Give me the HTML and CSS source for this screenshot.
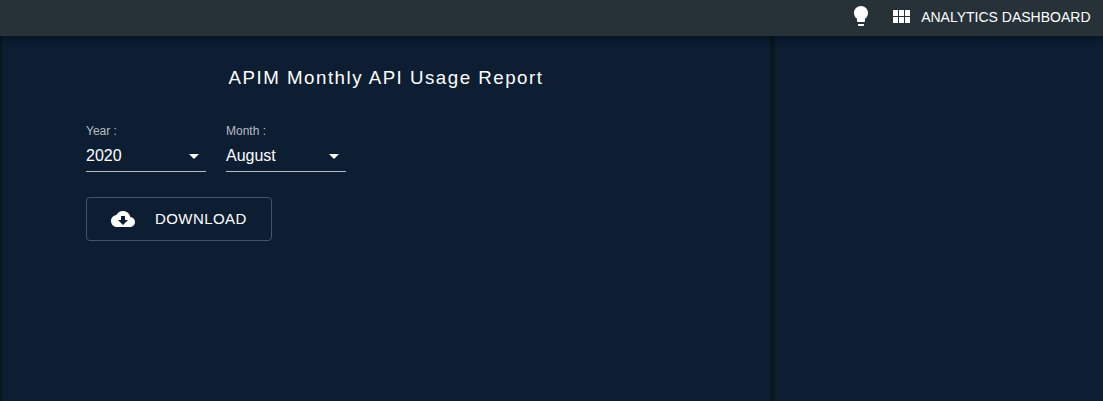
FILE: index.html
```html
<!DOCTYPE html>
<html lang="en">
<head>
<meta charset="utf-8">
<title>Analytics Dashboard</title>
<link rel="stylesheet" href="styles.css">
</head>
<body>
<header class="topbar">
  <svg class="icon bulb" viewBox="0 0 24 24"><path d="M9 21c0 .55.45 1 1 1h4c.55 0 1-.45 1-1v-1H9v1zm3-19C8.14 2 5 5.14 5 9c0 2.38 1.19 4.47 3 5.74V17c0 .55.45 1 1 1h6c.55 0 1-.45 1-1v-2.26c1.81-1.27 3-3.36 3-5.74 0-3.86-3.14-7-7-7z"/></svg>
  <a class="portal"><svg class="icon" viewBox="0 0 24 24"><path d="M4 11h5V5H4v6zm0 7h5v-6H4v6zm6 0h5v-6h-5v6zm6 0h5v-6h-5v6zm-6-7h5V5h-5v6zm6-6v6h5V5h-5z"/></svg><span>ANALYTICS DASHBOARD</span></a>
</header>
<main class="panes">
  <section class="pane report">
    <h1 class="title">APIM Monthly API Usage Report</h1>
    <form class="form">
      <div class="fields">
        <div class="field"><label class="label">Year :</label><div class="select"><span>2020</span><svg class="icon" viewBox="0 0 24 24"><path d="M7 10l5 5 5-5z"/></svg></div></div>
        <div class="field"><label class="label">Month :</label><div class="select"><span>August</span><svg class="icon" viewBox="0 0 24 24"><path d="M7 10l5 5 5-5z"/></svg></div></div>
      </div>
      <button class="download" type="button"><svg class="icon" viewBox="0 0 24 24"><path d="M19.35 10.04C18.67 6.59 15.64 4 12 4 9.11 4 6.6 5.64 5.35 8.04 2.34 8.36 0 10.91 0 14c0 3.31 2.69 6 6 6h13c2.76 0 5-2.24 5-5 0-2.64-2.05-4.78-4.65-4.96zM17 13l-5 5-5-5h3V9h4v4h3z"/></svg><span class="download-text">DOWNLOAD</span></button>
    </form>
  </section>
  <section class="pane side"></section>
</main>
</body>
</html>
```
FILE: styles.css
```css
* { box-sizing: border-box; }
body { margin: 0; height: 401px; overflow: hidden; display: flex; flex-direction: column; background: #08181e; color: #fff; font-family: "Liberation Sans", Arial, sans-serif; }
.icon { display: block; width: 24px; height: 24px; fill: #fff; flex: none; }
.topbar { height: 36px; flex: none; display: flex; align-items: center; justify-content: flex-end; padding: 0 12.5px 2px 0; background: #263238; box-shadow: 0 2px 4px -1px rgba(0,0,0,.2), 0 4px 5px rgba(0,0,0,.14), 0 1px 10px rgba(0,0,0,.12); z-index: 1; }
.portal { display: flex; align-items: center; gap: 8px; margin-left: 16px; font-size: 14px; line-height: 20px; }
.bulb { margin-top: -2px; }
.panes { flex: 1; display: flex; gap: 5px; padding-left: 2px; }
.pane { background: #0d1e33; border: 1px solid #0c1f25; border-width: 0 1px 1px; }
.report { width: 768px; flex: none; }
.side { flex: 1; border-right: 0; }
.title { margin: 30px 0 0; text-align: center; font-size: 18.72px; line-height: 24px; font-weight: 400; letter-spacing: 1.5px; }
.form { padding: 33px 0 0 83px; }
.fields { display: flex; gap: 20px; }
.field { width: 120px; }
.label { display: block; font-size: 12px; line-height: 16px; color: #b7bcc2; }
.select { display: flex; align-items: center; justify-content: space-between; height: 33px; padding-top: 2px; border-bottom: 1px solid #b7bcc2; font-size: 16px; }
.download { display: flex; align-items: center; gap: 20px; width: 186px; height: 44px; margin-top: 25px; padding: 0 24px; border: 1px solid #475463; border-radius: 4px; background: transparent; color: #fff; font: 15px "Liberation Sans", Arial, sans-serif; letter-spacing: .43px; }
.download-text { margin-top: -2px; }
```
